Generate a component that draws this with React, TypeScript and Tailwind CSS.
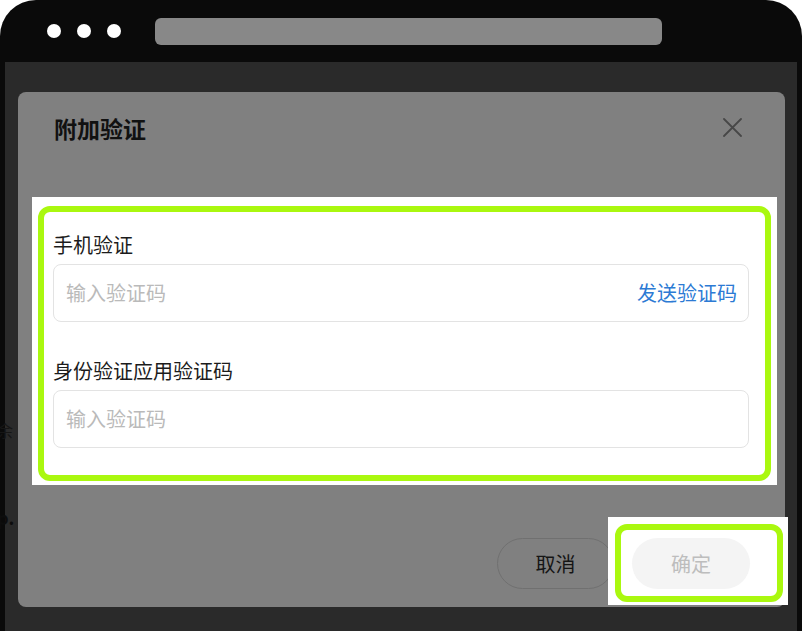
import React from 'react';

const font = { fontFamily: '"Noto Sans CJK SC", "Noto Sans", sans-serif' };

const CodeField: React.FC<{ label: string; action?: string }> = ({ label, action }) => (
  <div>
    <div className="h-[28px] leading-[28px] text-[20px] text-[#1c1c1c]">{label}</div>
    <div className="mt-[5px] h-[58px] w-[696px] flex items-center rounded-[8px] border border-[#e3e3e3] bg-white pl-[12px] pr-[11px]">
      <input
        placeholder="输入验证码"
        className="flex-1 min-w-0 bg-transparent text-[20px] text-[#1c1c1c] outline-none placeholder:text-[#bababa]"
        style={font}
      />
      {action && <span className="text-[20px] text-[#2c7ad4] whitespace-nowrap">{action}</span>}
    </div>
  </div>
);

export default function App() {
  return (
    <div className="w-[802px] h-[631px] bg-white overflow-hidden" style={font}>
      <div className="relative h-full flex flex-col rounded-t-[36px] bg-[#0a0a0a]">
        {/* browser bar */}
        <div className="h-[62px] flex items-center pl-[47px] shrink-0">
          <div className="flex gap-[16px]">
            <span className="w-[14px] h-[14px] rounded-full bg-white" />
            <span className="w-[14px] h-[14px] rounded-full bg-white" />
            <span className="w-[14px] h-[14px] rounded-full bg-white" />
          </div>
          <div className="ml-[34px] w-[507px] h-[27px] rounded-[6px] bg-[#888888]" />
        </div>

        {/* page behind overlay */}
        <div className="relative flex-1 mx-[5px] bg-[#2a2a2a] pt-[30px] pl-[13px]">
          <span className="absolute left-[-8px] top-[356px] text-[16px] text-[#161616]">余</span>
          <span className="absolute left-[-8px] top-[442px] text-[18px] font-bold text-[#0d0d0d]">p.</span>

          {/* modal */}
          <div className="w-[767px] h-[515px] rounded-[8px] bg-[#808080]">
            <div className="h-[105px] flex items-start justify-between pl-[36px] pr-[43px] pt-[21px]">
              <h2 className="text-[23px] leading-[30px] font-bold text-[#111]">附加验证</h2>
              <svg className="mt-[5px]" width="19" height="19" viewBox="0 0 19 19" fill="none" stroke="#474747" strokeWidth="1.8" strokeLinecap="round">
                <path d="M1 1L18 18M18 1L1 18" />
              </svg>
            </div>

            <div className="ml-[14px] w-[745px] h-[288px] bg-white pt-[9px] pl-[6px]">
              <div className="w-[733px] h-[275px] rounded-[12px] border-[6px] border-[#aaf80f] pt-[19px] pl-[9px] flex flex-col gap-[35px]">
                <CodeField label="手机验证" action="发送验证码" />
                <CodeField label="身份验证应用验证码" />
              </div>
            </div>

            <div className="mt-[32px] flex justify-end items-start">
              <button className="mt-[21px] w-[117px] h-[51px] rounded-full border border-[#707070] text-[20px] text-[#151515]">
                取消
              </button>
              <div className="-ml-[6px] -mr-[3px] w-[180px] h-[88px] bg-white pt-[7px] pl-[7px]">
                <div className="w-[168px] h-[78px] rounded-[12px] border-[6px] border-[#aaf80f] pt-[8px] pl-[11px]">
                  <button className="w-[118px] h-[51px] rounded-full bg-[#f4f4f4] text-[20px] text-[#bdbdbd]">
                    确定
                  </button>
                </div>
              </div>
            </div>
          </div>
        </div>
      </div>
    </div>
  );
}
